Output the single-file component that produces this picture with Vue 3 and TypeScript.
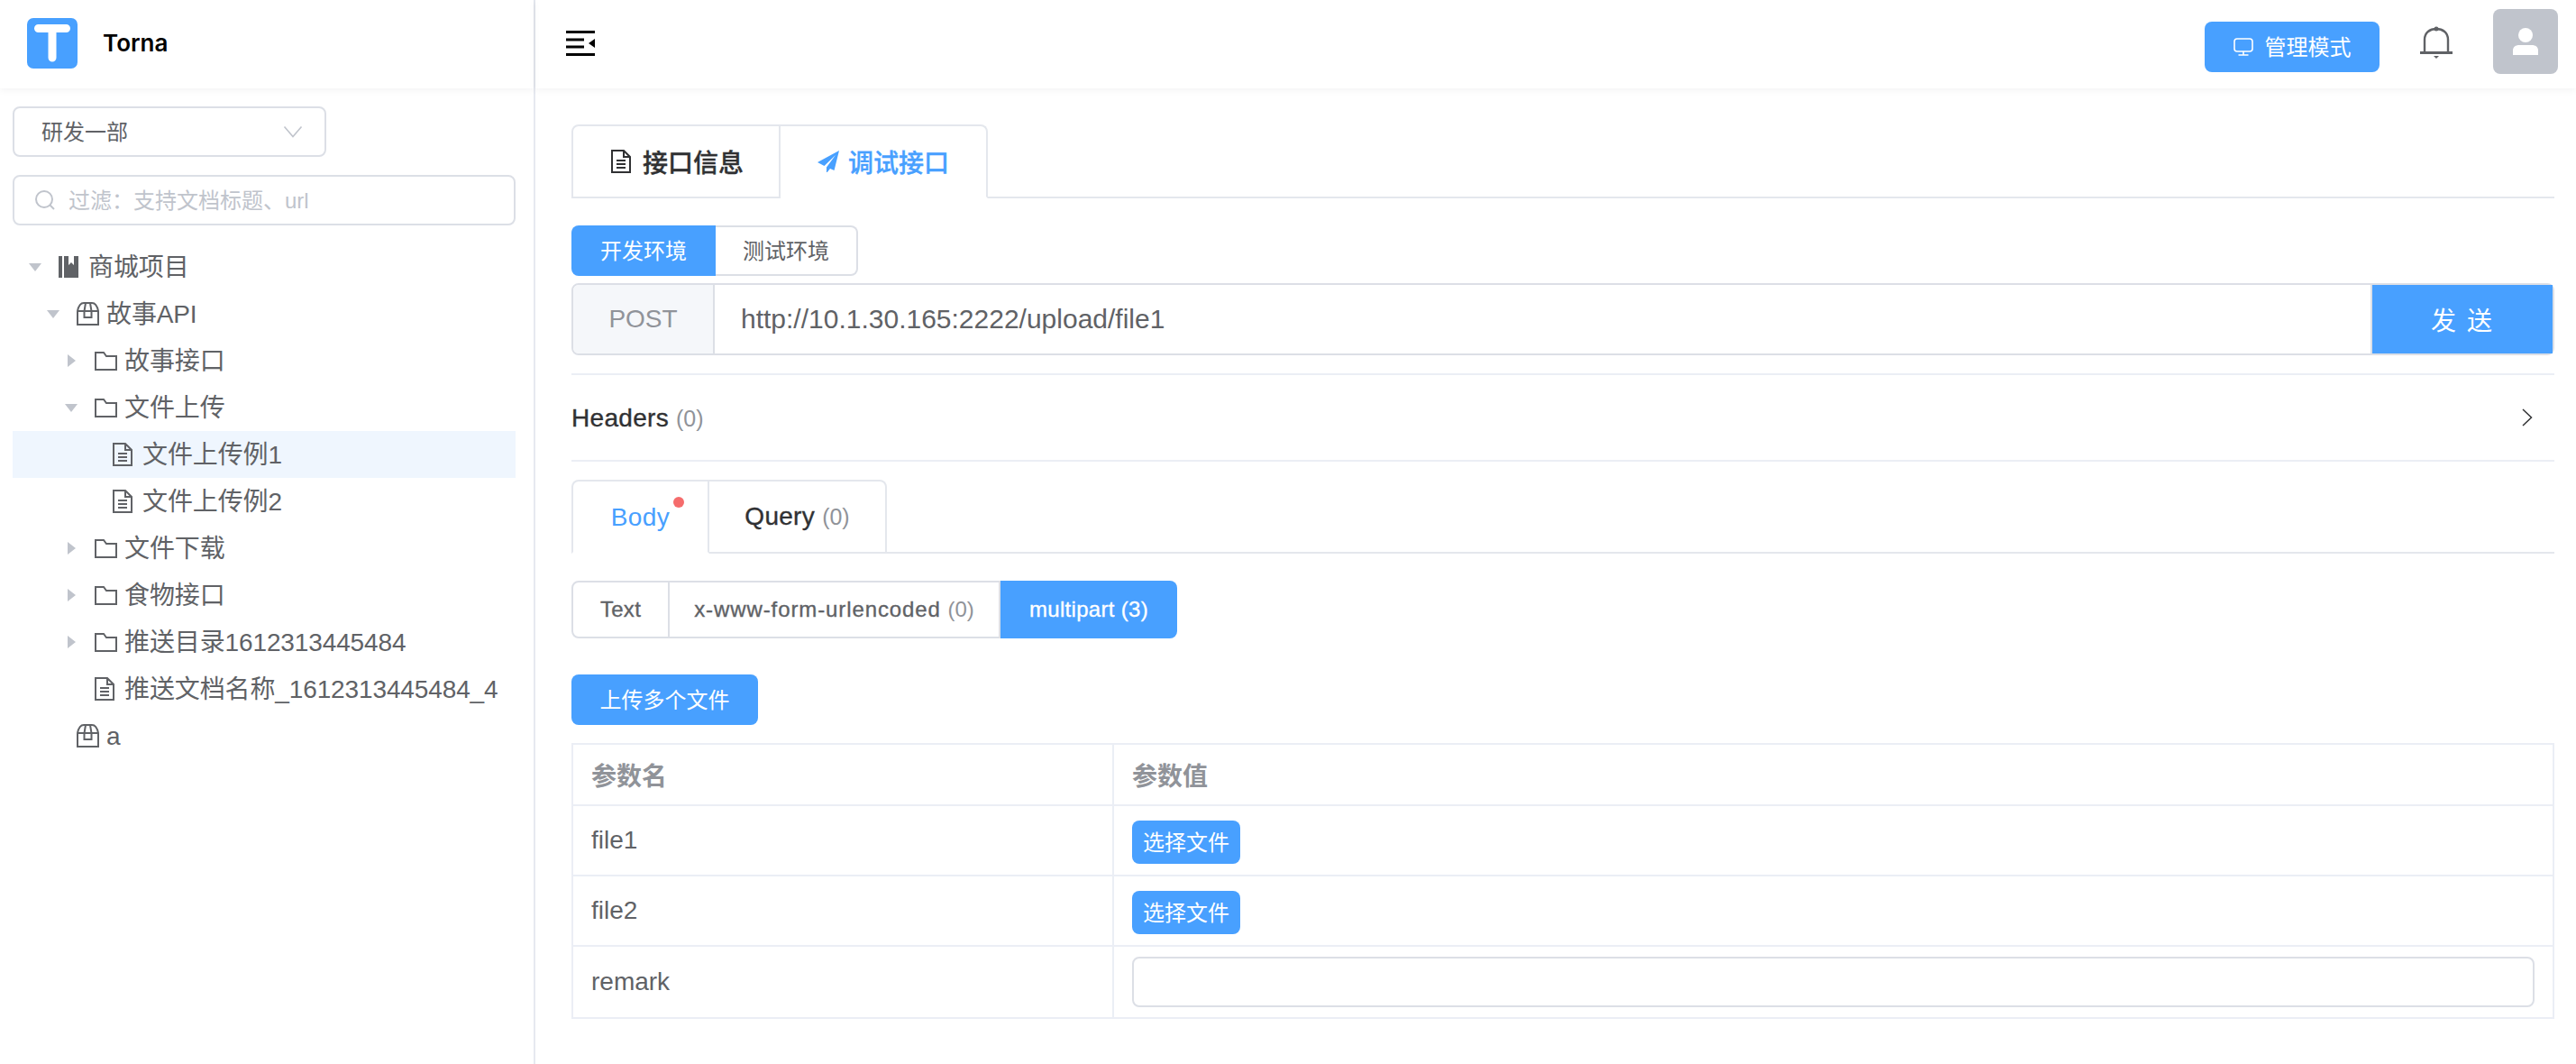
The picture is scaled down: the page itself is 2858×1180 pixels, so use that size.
<script setup lang="ts">
type Kind = 'book' | 'box' | 'folder' | 'doc'
interface TreeRow {
  label: string
  level: number
  kind: Kind
  caret?: 'down' | 'right'
  active?: boolean
}
const rows: TreeRow[] = [
  { label: '商城项目', level: 0, kind: 'book', caret: 'down' },
  { label: '故事API', level: 1, kind: 'box', caret: 'down' },
  { label: '故事接口', level: 2, kind: 'folder', caret: 'right' },
  { label: '文件上传', level: 2, kind: 'folder', caret: 'down' },
  { label: '文件上传例1', level: 3, kind: 'doc', active: true },
  { label: '文件上传例2', level: 3, kind: 'doc' },
  { label: '文件下载', level: 2, kind: 'folder', caret: 'right' },
  { label: '食物接口', level: 2, kind: 'folder', caret: 'right' },
  { label: '推送目录1612313445484', level: 2, kind: 'folder', caret: 'right' },
  { label: '推送文档名称_1612313445484_4', level: 2, kind: 'doc' },
  { label: 'a', level: 1, kind: 'box' }
]
</script>

<template>
  <div class="page">
    <aside class="side">
      <div class="brand">
        <svg class="logo" viewBox="0 0 56 56" width="56" height="56">
          <rect width="56" height="56" rx="7" fill="#48a0ff" />
          <path d="M12.500 11.500H43.500M28 11.500V44" stroke="#fff" stroke-width="9" stroke-linecap="round" fill="none" />
        </svg>
        <span class="brand-name">Torna</span>
      </div>
      <div class="side-body">
        <div class="select">
          <span>研发一部</span>
          <svg width="22" height="14" viewBox="0 0 22 14"><path d="M1.500 1.500L11 12.500L20.500 1.500" fill="none" stroke="#c0c4cc" stroke-width="1.600" /></svg>
        </div>
        <div class="filter">
          <svg width="24" height="24" viewBox="0 0 24 24"><circle cx="11" cy="11" r="9" fill="none" stroke="#c0c4cc" stroke-width="2" /><path d="M17.500 17.500L22 22" stroke="#c0c4cc" stroke-width="2" /></svg>
          <span>过滤：支持文档标题、url</span>
        </div>
        <ul class="tree">
          <li v-for="row in rows" :key="row.label" class="row" :class="{ active: row.active }" :style="{ paddingLeft: row.level * 20 + 'px' }">
            <span class="caret">
              <svg v-if="row.caret === 'down'" width="14" height="9" viewBox="0 0 14 9"><path d="M0 0H14L7 9Z" fill="#c0c4cc" /></svg>
              <svg v-else-if="row.caret === 'right'" width="9" height="14" viewBox="0 0 9 14"><path d="M0 0V14L9 7Z" fill="#c0c4cc" /></svg>
            </span>
            <span class="node-icon">
              <svg v-if="row.kind === 'book'" width="22" height="24" viewBox="0 0 22 24"><path d="M0 0H4V24H0ZM6 0H11V10L14 7L17 10V0H22V24H6Z" fill="#606266" /></svg>
              <svg v-else-if="row.kind === 'box'" width="25" height="26" viewBox="0 0 25 26" fill="none" stroke="#606266" stroke-width="2"><path d="M1 10C2 5 4 1 8 1H17C21 1 23 5 24 10V25H1ZM1 10H24M10 1L8.500 10V17H16.500V10L15 1" /></svg>
              <svg v-else-if="row.kind === 'folder'" width="25" height="21" viewBox="0 0 25 21" fill="none" stroke="#606266" stroke-width="2"><path d="M1 1H10L13 5H24V20H1Z" /></svg>
              <svg v-else width="22" height="26" viewBox="0 0 22 26" fill="none" stroke="#606266" stroke-width="2"><path d="M1 1H14L21 8V25H1ZM14 1V8H21M6 12H16M6 16H16M6 20H16" /></svg>
            </span>
            <span class="node-label">{{ row.label }}</span>
          </li>
        </ul>
      </div>
    </aside>

    <div class="main">
      <header class="topbar">
        <svg class="fold" width="32" height="28" viewBox="0 0 32 28"><path d="M0 1.500H32M0 10H20M0 18H20M0 26.500H32" stroke="#000" stroke-width="3" /><path d="M32 9V19L25 14Z" fill="#000" /></svg>
        <div class="top-right">
          <button class="btn manage">
            <svg width="22" height="20" viewBox="0 0 22 20" fill="none" stroke="#fff" stroke-width="1.600"><rect x="1" y="1" width="20" height="14" rx="3" /><path d="M11 15V19M5.500 19H16.500" /></svg>
            <span>管理模式</span>
          </button>
          <svg class="bell" width="36" height="36" viewBox="0 0 36 36"><path d="M5 30V15C5 7 11 3 18 3S31 7 31 15V30" fill="none" stroke="#606266" stroke-width="2.400" /><path d="M0 29.500H36" stroke="#606266" stroke-width="3" stroke-linecap="round" /><circle cx="18" cy="3" r="2.500" fill="#606266" /><path d="M15 33H21L18 36Z" fill="#606266" /></svg>
          <div class="avatar">
            <svg width="28" height="30" viewBox="0 0 28 30"><circle cx="14" cy="8" r="8" fill="#fff" /><path d="M0 30V25C0 21 3 19 7 19H21C25 19 28 21 28 25V30Z" fill="#fff" /></svg>
          </div>
        </div>
      </header>

      <section class="content">
        <div class="tabs">
          <div class="tab info">
            <svg width="22" height="26" viewBox="0 0 22 26" fill="none" stroke="#303133" stroke-width="2"><path d="M1 1H14L21 8V25H1ZM14 1V8H21M6 12H16M6 16H16M6 20H16" /></svg>
            <span class="cjk-strong">接口信息</span>
          </div>
          <div class="tab on">
            <svg width="24" height="24" viewBox="0 0 24 24"><path d="M24 0L0 13L7.500 17L20 5L10 18.500V25L14 20L18.500 22Z" fill="#48a0ff" /></svg>
            <span class="cjk-strong">调试接口</span>
          </div>
        </div>

        <div class="env">
          <span class="env-btn on"><b>开发环境</b></span>
          <span class="env-btn"><b>测试环境</b></span>
        </div>

        <div class="url">
          <span class="method">POST</span>
          <span class="address">http://10.1.30.165:2222/upload/file1</span>
          <button class="send">发 送</button>
        </div>

        <div class="headers">
          <span class="strong">Headers <em>(0)</em></span>
          <svg width="12" height="20" viewBox="0 0 12 20"><path d="M1 1L10.500 10L1 19" fill="none" stroke="#303133" stroke-width="1.500" /></svg>
        </div>

        <div class="tabs sub">
          <div class="tab on body"><span class="latin">Body</span><i class="dot"></i></div>
          <div class="tab query"><span class="strong">Query <em>(0)</em></span></div>
        </div>

        <div class="types">
          <span class="type"><span class="strong">Text</span></span>
          <span class="type"><span class="strong wide">x-www-form-urlencoded <em>(0)</em></span></span>
          <span class="type on"><span class="strong">multipart (3)</span></span>
        </div>

        <button class="btn upload"><span>上传多个文件</span></button>

        <table class="params">
          <colgroup><col class="c1" /><col /></colgroup>
          <thead>
            <tr class="r-head"><th>参数名</th><th>参数值</th></tr>
          </thead>
          <tbody>
            <tr class="r-file"><td>file1</td><td><button class="btn pick"><span>选择文件</span></button></td></tr>
            <tr class="r-file"><td>file2</td><td><button class="btn pick"><span>选择文件</span></button></td></tr>
            <tr class="r-remark"><td>remark</td><td><div class="text-input"></div></td></tr>
          </tbody>
        </table>
      </section>
    </div>
  </div>
</template>

<style>
html, body { margin: 0; background: #fff; }
</style>

<style scoped>
.page {
  display: flex;
  width: 2858px;
  height: 1180px;
  overflow: hidden;
  font-family: "Liberation Sans", "Noto Sans CJK SC", sans-serif;
  color: #606266;
  font-size: 28px;
}
em { font-style: normal; color: #909399; -webkit-text-stroke: 0; letter-spacing: 0; }
b { font-weight: 400; margin-bottom: 4px; }
.strong { -webkit-text-stroke: .35px currentColor; letter-spacing: .3px; }
.wide { letter-spacing: .9px; }
.headers em, .query em { font-size: 25px; }
.cjk-strong { -webkit-text-stroke: .35px currentColor; }
.latin { letter-spacing: .4px; margin-top: 2px; }
.side {
  width: 594px;
  flex: none;
  box-sizing: border-box;
  border-right: 2px solid #e6e9f0;
}
.brand {
  height: 98px;
  display: flex;
  align-items: center;
  padding-left: 30px;
  gap: 28px;
  box-shadow: 0 2px 8px rgba(0, 21, 41, .05);
}
.logo { margin-top: -2px; }
.brand-name { font-family: Inter, sans-serif; font-size: 26px; font-weight: 600; color: #000; margin-bottom: 4px; }
.side-body { padding: 20px 20px 0 14px; }
.select {
  width: 348px;
  height: 56px;
  box-sizing: border-box;
  border: 2px solid #dcdfe6;
  border-radius: 8px;
  display: flex;
  align-items: center;
  justify-content: space-between;
  padding: 0 24px 0 30px;
  font-size: 24px;
}
.select span, .filter span { margin-bottom: 4px; }
.filter {
  margin-top: 20px;
  height: 56px;
  box-sizing: border-box;
  border: 2px solid #dcdfe6;
  border-radius: 8px;
  display: flex;
  align-items: center;
  gap: 14px;
  padding-left: 22px;
  font-size: 24px;
  color: #c0c4cc;
}
.tree { list-style: none; margin: 20px 0 0; padding: 0; }
.row { height: 52px; display: flex; align-items: center; line-height: 52px; white-space: nowrap; }
.row.active { background: #eff6fe; }
.caret { width: 50px; flex: none; display: flex; justify-content: center; align-items: center; }
.node-icon { width: 34px; flex: none; display: flex; align-items: center; padding-left: 1px; box-sizing: border-box; }
.node-label { padding-top: 1px; letter-spacing: -.12px; }
.main { flex: 1; min-width: 0; }
.topbar {
  height: 98px;
  display: flex;
  align-items: center;
  justify-content: space-between;
  padding: 0 20px 0 34px;
  box-shadow: 0 2px 8px rgba(0, 21, 41, .05);
}
.fold { margin-top: -2px; }
.top-right { display: flex; align-items: center; }
.btn {
  border: 0;
  background: #48a0ff;
  color: #fff;
  border-radius: 8px;
  font-family: inherit;
  font-size: 24px;
  padding: 0;
  display: inline-flex;
  align-items: center;
  justify-content: center;
}
.btn span { margin-bottom: 4px; }
.manage { width: 194px; height: 56px; gap: 13px; margin-top: 6px; }
.bell { margin: -5px 0 0 45px; }
.avatar {
  width: 72px;
  height: 72px;
  margin: -6px 0 0 45px;
  border-radius: 8px;
  background: #c0c4cc;
  display: flex;
  align-items: center;
  justify-content: center;
}
.content { width: 2200px; padding: 40px 0 0 40px; }
.tabs {
  height: 82px;
  box-sizing: border-box;
  border-bottom: 2px solid #e4e7ed;
  display: flex;
}
.tab {
  height: 82px;
  box-sizing: border-box;
  border: 2px solid #e4e7ed;
  border-left-width: 0;
  display: flex;
  align-items: center;
  justify-content: center;
  gap: 13px;
  font-weight: 500;
  color: #303133;
}
.tab:first-child { width: 232px; border-left-width: 2px; border-radius: 8px 0 0 0; }
.tab.info { padding-left: 3px; }
.tab:last-child { width: 230px; gap: 10px; border-radius: 0 8px 0 0; }
.tab.on { color: #48a0ff; border-bottom-color: #fff; }
.sub { margin-top: 20px; }
.sub .body { width: 153px; position: relative; font-weight: 400; }
.sub .query { width: 197px; }
.dot {
  position: absolute;
  top: 17px;
  left: 111px;
  width: 12px;
  height: 12px;
  border-radius: 50%;
  background: #f56c6c;
}
.env { display: flex; margin-top: 30px; height: 56px; }
.env-btn {
  width: 158px;
  box-sizing: border-box;
  border: 2px solid #dcdfe6;
  border-left-width: 0;
  border-radius: 0 8px 8px 0;
  display: flex;
  align-items: center;
  justify-content: center;
  font-size: 24px;
}
.env-btn.on {
  width: 160px;
  border: 0;
  border-radius: 8px 0 0 8px;
  background: #48a0ff;
  color: #fff;
}
.url {
  margin-top: 8px;
  height: 80px;
  box-sizing: border-box;
  border: 2px solid #dcdfe6;
  border-radius: 8px;
  display: flex;
  align-items: stretch;
}
.method {
  width: 155px;
  flex: none;
  background: #f5f7fa;
  border-right: 2px solid #dcdfe6;
  border-radius: 6px 0 0 6px;
  color: #909399;
  display: flex;
  align-items: center;
  justify-content: center;
}
.address { flex: 1; padding-left: 29px; line-height: 76px; font-size: 30px; }
.send {
  width: 202px;
  flex: none;
  border: 0;
  border-left: 2px solid #dcdfe6;
  background: #48a0ff;
  color: #fff;
  font-family: inherit;
  font-size: 28px;
  letter-spacing: 2px;
  padding: 0;
}
.headers {
  margin-top: 20px;
  height: 98px;
  box-sizing: border-box;
  border-top: 2px solid #ebeef5;
  border-bottom: 2px solid #ebeef5;
  display: flex;
  align-items: center;
  justify-content: space-between;
  padding-right: 24px;
  color: #303133;
}
.headers .strong { padding-top: 2px; }
.types { display: flex; margin-top: 30px; height: 64px; font-size: 24px; }
.type {
  box-sizing: border-box;
  border: 2px solid #dcdfe6;
  border-left-width: 0;
  display: flex;
  align-items: center;
  justify-content: center;
  width: 367px;
}
.type:first-child { width: 109px; border-left-width: 2px; border-radius: 8px 0 0 8px; }
.type.on { width: 196px; border: 0; background: #48a0ff; color: #fff; border-radius: 0 8px 8px 0; }
.upload { display: flex; width: 207px; height: 56px; margin-top: 40px; }
.params {
  width: 2200px;
  margin-top: 20px;
  border-collapse: collapse;
  table-layout: fixed;
}
.c1 { width: 600px; }
.params th, .params td {
  border: 2px solid #ebeef5;
  padding: 0 0 0 20px;
  text-align: left;
  vertical-align: middle;
}
.params th { color: #909399; font-weight: 700; }
.r-head { height: 68px; }
.r-file { height: 78px; }
.r-remark { height: 80px; }
.pick { width: 120px; height: 48px; margin-top: 4px; vertical-align: middle; }
.text-input {
  width: 1556px;
  height: 56px;
  box-sizing: border-box;
  border: 2px solid #dcdfe6;
  border-radius: 8px;
}
</style>
